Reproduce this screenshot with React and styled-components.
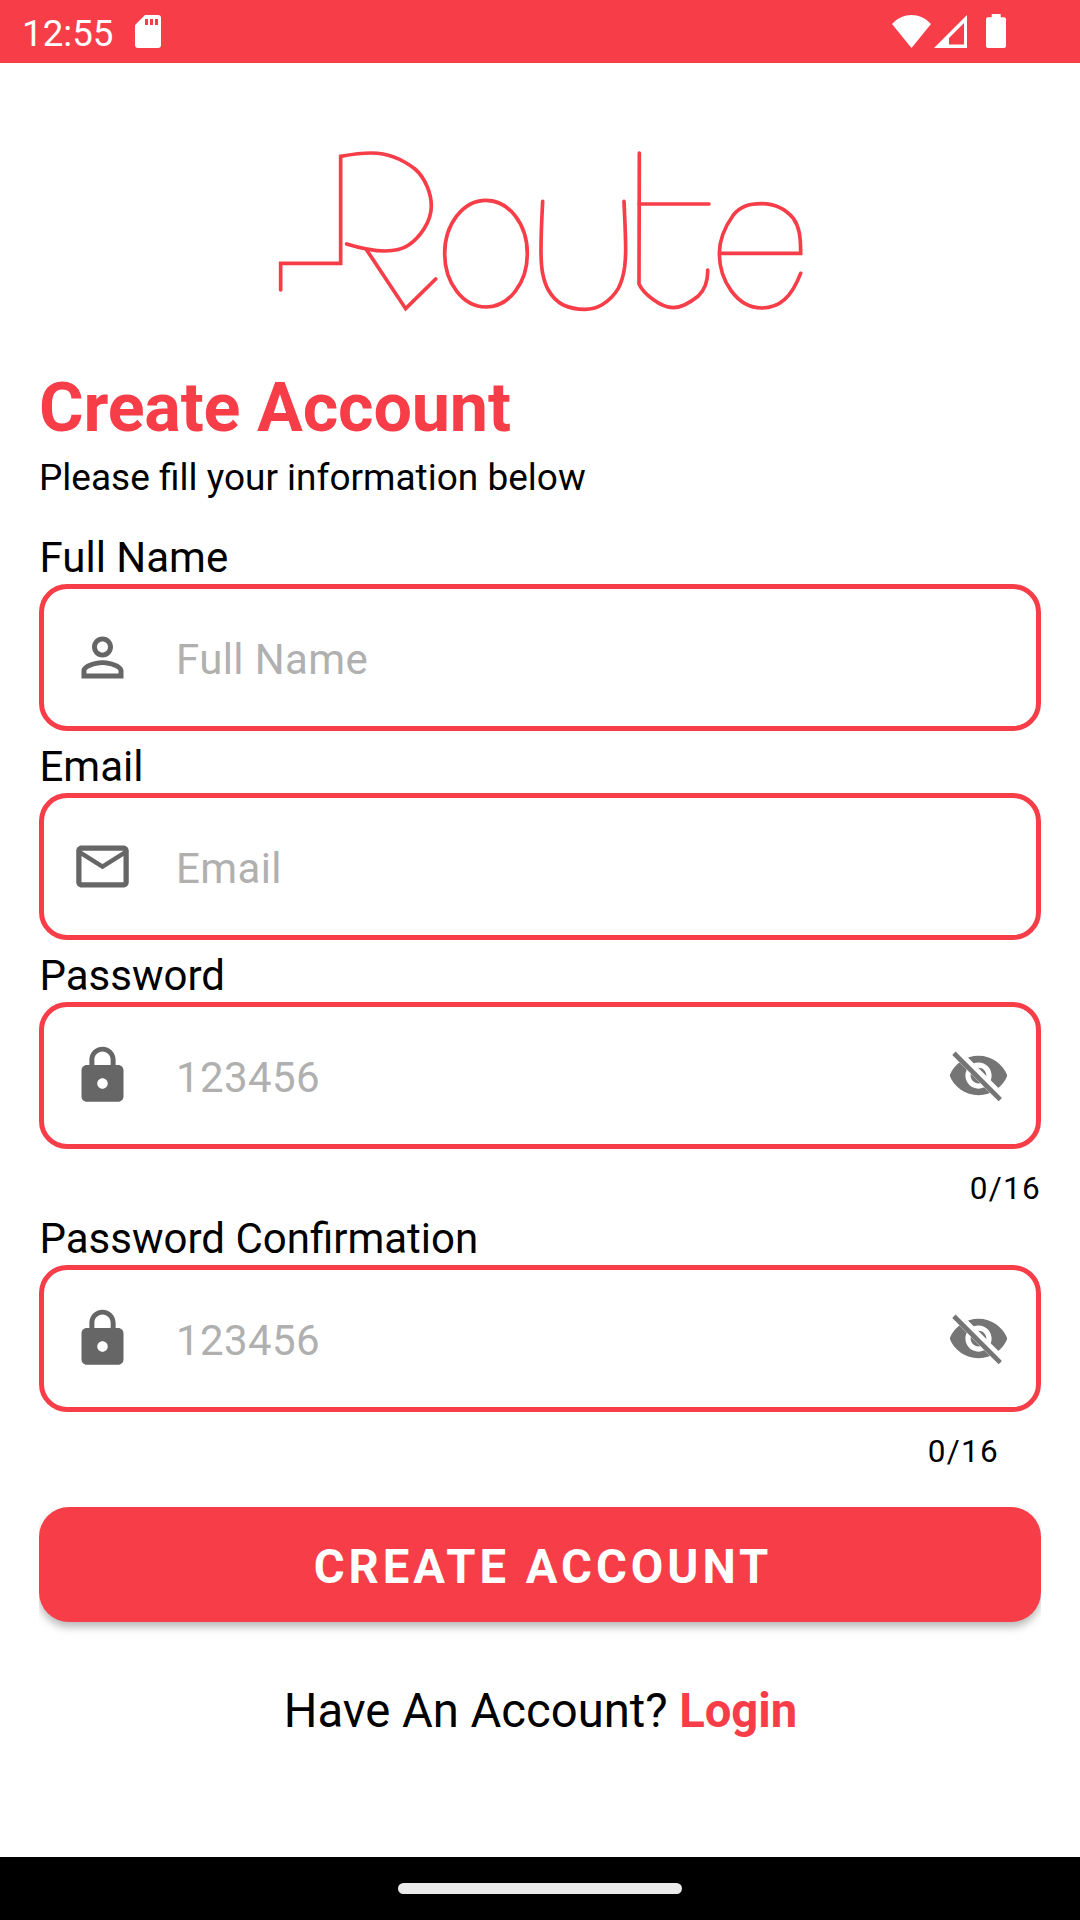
import React from "react";
import styled, { createGlobalStyle } from "styled-components";

const RED = "#f63d48";

const GlobalStyle = createGlobalStyle`
  *, *::before, *::after { box-sizing: border-box; }
  body { margin: 0; background: #fff; font-family: Roboto, "Liberation Sans", sans-serif; }
`;

const Screen = styled.div`
  width: 1080px;
  height: 1920px;
  display: flex;
  flex-direction: column;
  background: #fff;
  color: #000;
  overflow: hidden;
`;

const StatusBar = styled.header`
  flex: none;
  height: 63px;
  padding: 0 74px 1px 22px;
  display: flex;
  align-items: center;
  background: ${RED};
  color: #fff;
`;

const Clock = styled.span`
  font-size: 36.75px;
  line-height: 44px;
  margin: 5px 21px 0 0;
  width: 92px;
  white-space: nowrap;
`;

const StatusIcon = styled.svg`
  flex: none;
  display: block;
  fill: #fff;
  margin-left: ${(p) => p.$gap || 0}px;
`;

const Spacer = styled.span`
  flex: 1;
`;

const Content = styled.main`
  flex: 1;
  padding: 0 39px;
  display: flex;
  flex-direction: column;
`;

const Logo = styled.svg`
  display: block;
  flex: none;
  width: 570px;
  height: 200px;
  margin: 67px 0 0 221px;
  fill: none;
  stroke: ${RED};
  stroke-width: 11;
  stroke-linecap: round;
  stroke-linejoin: miter;
`;

const Title = styled.h1`
  margin: 38px 0 8px;
  font-size: 68.25px;
  line-height: 80px;
  font-weight: 700;
  letter-spacing: -0.18px;
  color: ${RED};
`;

const Subtitle = styled.p`
  margin: 0 0 33px;
  font-size: 37px;
  line-height: 44px;
`;

const Form = styled.form`
  display: flex;
  flex-direction: column;
`;

const Field = styled.div`
  display: flex;
  flex-direction: column;
  margin-bottom: ${(p) => p.$gap}px;
`;

const Label = styled.label`
  font-size: 42px;
  line-height: 50px;
  padding-left: 0.5px;
  margin-bottom: 1px;
`;

const InputBox = styled.div`
  height: 147px;
  display: flex;
  align-items: center;
  padding: 0 26px 0 27px;
  border: 5px solid ${RED};
  border-radius: 28px;
`;

const FieldIcon = styled.svg`
  flex: none;
  display: block;
  width: 63px;
  height: 63px;
  fill: ${(p) => p.$color || "#666"};
`;

const Input = styled.input`
  flex: 1;
  min-width: 0;
  height: 60px;
  margin: 3px 0 0 42px;
  padding: 0;
  border: 0;
  outline: 0;
  background: transparent;
  font: 400 42px Roboto, "Liberation Sans", sans-serif;
  letter-spacing: 0.009375em;
  &::placeholder { color: #b0b0b0; opacity: 1; }
`;

const Counter = styled.span`
  align-self: flex-end;
  margin: 21px ${(p) => p.$inset || 0}px 0 0;
  font-size: 31.5px;
  line-height: 37px;
  letter-spacing: 0.04em;
`;

const SubmitButton = styled.button`
  height: 115px;
  padding: 5px 0 0 6px;
  border: 0;
  border-radius: 30px;
  background: ${RED};
  color: #fff;
  font: 700 47.25px Roboto, "Liberation Sans", sans-serif;
  letter-spacing: 3.96px;
  box-shadow: 0 5px 9px rgba(0, 0, 0, 0.28);
  clip-path: inset(0 0 -30px 0);
`;

const Footer = styled.p`
  margin: 61px 0 0;
  padding-left: 1px;
  text-align: center;
  font-size: 47.25px;
  line-height: 56px;
  letter-spacing: -0.03px;
`;

const LoginLink = styled.span`
  font-weight: 700;
  color: ${RED};
`;

const NavBar = styled.nav`
  flex: none;
  height: 63px;
  display: flex;
  justify-content: center;
  align-items: center;
  background: #000;
`;

const Handle = styled.span`
  width: 284px;
  height: 11px;
  border-radius: 6px;
  background: #ebebeb;
`;

const PERSON =
  "M12,5.9c1.16,0 2.1,0.94 2.1,2.1s-0.94,2.1 -2.1,2.1S9.9,9.16 9.9,8s0.94,-2.1 2.1,-2.1m0,9c2.97,0 6.1,1.46 6.1,2.1v1.1L5.9,18.1L5.9,17c0,-0.64 3.13,-2.1 6.1,-2.1M12,4C9.79,4 8,5.79 8,8s1.79,4 4,4 4,-1.79 4,-4 -1.79,-4 -4,-4zM12,13c-2.67,0 -8,1.34 -8,4v3h16v-3c0,-2.66 -5.33,-4 -8,-4z";
const MAIL =
  "M22,6c0,-1.1 -0.9,-2 -2,-2L4,4c-1.1,0 -2,0.9 -2,2v12c0,1.1 0.9,2 2,2h16c1.1,0 2,-0.9 2,-2L22,6zM20,6l-8,5 -8,-5h16zM20,18L4,18L4,8l8,5 8,-5v10z";
const LOCK =
  "M18,8h-1V6c0,-2.76 -2.24,-5 -5,-5S7,3.24 7,6v2H6c-1.1,0 -2,0.9 -2,2v10c0,1.1 0.9,2 2,2h12c1.1,0 2,-0.9 2,-2V10c0,-1.1 -0.9,-2 -2,-2zM12,17c-1.1,0 -2,-0.9 -2,-2s0.9,-2 2,-2 2,0.9 2,2 -0.9,2 -2,2zM15.1,8H8.9V6c0,-1.71 1.39,-3.1 3.1,-3.1 1.71,0 3.1,1.39 3.1,3.1v2z";
const EYE =
  "M12,4.5C7,4.5 2.73,7.61 1,12c1.73,4.39 6,7.5 11,7.5s9.27,-3.11 11,-7.5c-1.73,-4.39 -6,-7.5 -11,-7.5zM12,17c-2.76,0 -5,-2.24 -5,-5s2.24,-5 5,-5 5,2.24 5,5 -2.24,5 -5,5zM12,9c-1.66,0 -3,1.34 -3,3s1.34,3 3,3 3,-1.34 3,-3 -1.34,-3 -3,-3z";

function EyeOff({ clipId }) {
  return (
    <FieldIcon viewBox="0 0 24 24" $color="#757575">
      <clipPath id={clipId}>
        <path d="M2,4.27L19.73,22L22.27,19.46L4.54,1.73V1H23V23H1V4.27Z" />
      </clipPath>
      <path d={EYE} clipPath={`url(#${clipId})`} />
      <path d="M2.64,3.54L20.3,21.2" fill="none" stroke="#757575" strokeWidth="1.8" />
    </FieldIcon>
  );
}

function FormField({ id, label, placeholder, icon, gap, secret, counter, counterInset }) {
  return (
    <Field $gap={gap}>
      <Label htmlFor={id}>{label}</Label>
      <InputBox>
        <FieldIcon viewBox="0 0 24 24">
          <path d={icon} />
        </FieldIcon>
        <Input id={id} type={secret ? "password" : "text"} placeholder={placeholder} />
        {secret && <EyeOff clipId={`${id}-gap`} />}
      </InputBox>
      {counter && <Counter $inset={counterInset}>{counter}</Counter>}
    </Field>
  );
}

export default function App() {
  return (
    <Screen>
      <GlobalStyle />
      <StatusBar>
        <Clock>12:55</Clock>
        <StatusIcon width="26" height="33" viewBox="0 0 26 33">
          <path fillRule="evenodd" d="M10 0H23a3 3 0 0 1 3 3V30a3 3 0 0 1-3 3H3a3 3 0 0 1-3-3V10ZM10 4V10H13V4ZM15 4V10H18V4ZM20 4V10H23V4Z" />
        </StatusIcon>
        <Spacer />
        <StatusIcon width="39" height="33" viewBox="0 0 39 33">
          <path d="M0 9C11-3 28-3 39 9L19.5 33Z" />
        </StatusIcon>
        <StatusIcon width="33" height="33" viewBox="0 0 33 33" $gap={3}>
          <path fillRule="evenodd" d="M33 0V33H0ZM30 8L15 23V29.5H30Z" />
        </StatusIcon>
        <StatusIcon width="20" height="34" viewBox="0 0 20 34" $gap={19}>
          <path d="M5.7 0H14.7V3.3H18A2 2 0 0 1 20 5.3V32A2 2 0 0 1 18 34H2A2 2 0 0 1 0 32V5.3A2 2 0 0 1 2 3.3H5.7Z" />
        </StatusIcon>
      </StatusBar>
      <Content>
        <Logo viewBox="0 0 1710 600" role="img" aria-label="Route">
          <path d="M62 480V400H242V79C275 73 300 69 335 69C385 69 430 90 465 117C495 143 514 190 514 228C514 275 480 322 445 346C423 361 400 363 375 363C335 363 299 354 260 342" />
          <path d="M320 360L437 536L527 447" />
          <ellipse cx="678" cy="371" rx="124" ry="160" />
          <path d="M848 214C845 270 843 310 843 360C843 390 844 410 848 430C852 450 857 466 865 480C877 501 892 516 910 525C927 533 950 538 975 538C995 538 1011 533 1025 525C1045 513 1062 497 1075 475C1086 454 1091 432 1094 410C1096 392 1097 378 1097 360C1097 310 1094 265 1092 214" />
          <path d="M1138 69L1137 462C1150 490 1200 533 1240 533C1262 533 1290 518 1315 498C1335 478 1344 448 1343 420" />
          <path d="M1138 222H1347" />
          <path d="M1378 370H1622C1622 320 1618 290 1600 265C1578 239 1545 221 1505 221C1465 221 1440 230 1420 255C1400 283 1378 326 1378 370C1378 450 1430 534 1505 534C1560 534 1595 500 1622 430" />
        </Logo>
        <Title>Create Account</Title>
        <Subtitle>Please fill your information below</Subtitle>
        <Form>
          <FormField id="name" label="Full Name" placeholder="Full Name" icon={PERSON} gap={11} />
          <FormField id="email" label="Email" placeholder="Email" icon={MAIL} gap={11} />
          <FormField id="password" label="Password" placeholder="123456" icon={LOCK} gap={7} secret counter="0/16" />
          <FormField id="confirm" label="Password Confirmation" placeholder="123456" icon={LOCK} gap={37} secret counter="0/16" counterInset={42} />
          <SubmitButton type="button">CREATE ACCOUNT</SubmitButton>
        </Form>
        <Footer>
          Have An Account? <LoginLink>Login</LoginLink>
        </Footer>
      </Content>
      <NavBar>
        <Handle />
      </NavBar>
    </Screen>
  );
}
